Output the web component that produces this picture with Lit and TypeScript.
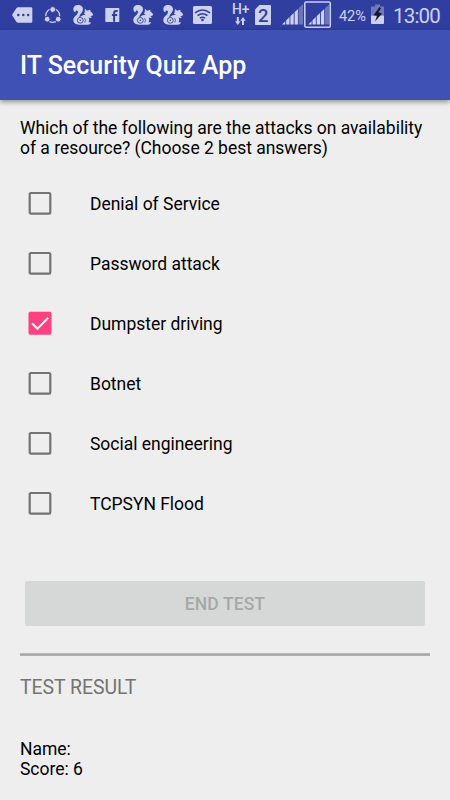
import { LitElement, html, css, svg } from "lit";
import { customElement, property, state } from "lit/decorators.js";

const squirrel = svg`
  <path d="M3.400 9.500C3.100 6.600 5.200 4.800 8.300 4.900c3 .1 4.900 2 4.700 4.700-.2 2.600-2.300 3.900-3.300 6-.4.900-.5 1.600-.3 2.300 1.500-2.300 3.700-3 6.400-3.200l2.200 1.300c1.300 2 1.600 4.400.6 6.200h2.300c-.3 1.800-1.700 2.500-3.500 2.500H9.300c-3.800 0-6-1.800-6-4.600 0-3.700 4-4.600 4.600-7.600.2-1.200-.3-1.900-1.200-1.900-.8 0-1.200.7-1.200 1.700-1.200-.1-2-1.200-2.100-2.800z"/>
  <path d="M14 13.800l.8-2 .1-3 2.200 1.900 3.200-.9.200 1.900c1.300.5 2.300 1.600 2.600 3-.4 1-1.600 1.300-3 1.300l1.800 1.200c-1 1.200-3 1-4.200-.2l-1.700-2.100z"/>
  <circle cx="10.300" cy="20.300" r="2.900" fill="none" stroke="#303f9f" stroke-width=".9"/>
  <circle cx="10.300" cy="20.300" r=".8" fill="#303f9f"/>
  <path d="M14.600 18.100q1.500 2.200.2 4.400" fill="none" stroke="#303f9f" stroke-width=".8"/>`;

const bars = svg`
  <path d="M0 24.500l3.300-3.200v3.200zM4.200 24.500v-4.200l3.300-3.200v7.400zM8.400 24.500v-8.200l3.300-3.200v11.400zM12.600 24.500v-12.300l3.300-3.200v15.500z"/>
  <path d="M16.600 24.500v-16.300l4.400-4.200v20.500z" opacity=".38"/>`;

@customElement("status-bar")
export class StatusBar extends LitElement {
  static styles = css`
    :host {
      display: flex;
      height: 30px;
      background: #303f9f;
      color: #cdd1ec;
      font-family: Roboto, "Liberation Sans", sans-serif;
      line-height: 30px;
      white-space: nowrap;
    }
    svg { display: block; flex: none; height: 30px; fill: #cdd1ec; }
    .h { font: 500 14.5px Roboto, sans-serif; }
    .sim { font: 500 18.5px Roboto, sans-serif; fill: #303f9f; }
    .pct { width: 32px; font-size: 14.600px; letter-spacing: -0.1px; padding-top: 1px; box-sizing: border-box; }
    .time { padding-left: 6px; font-size: 20.5px; letter-spacing: -0.8px; padding-top: 1px; }
  `;

  render() {
    return html`
      <svg width="42" viewBox="0 0 42 30">
        <path d="M12 15l4.500-7q.6-.8 1.600-.8H31q1.300 0 1.300 1.300v13q0 1.300-1.300 1.300H18.100q-1 0-1.600-.8z"/>
        <g fill="#303f9f"><circle cx="18.300" cy="15" r="1.250"/><circle cx="23.300" cy="15" r="1.250"/><circle cx="28.200" cy="15" r="1.250"/></g>
      </svg>
      <svg width="28" viewBox="0 0 28 30">
        <circle cx="10.700" cy="15.500" r="6.900" fill="none" stroke="#cdd1ec" stroke-width="1.300"/>
        <g stroke="#303f9f" stroke-width="1"><circle cx="10.700" cy="9.500" r="2.900"/><circle cx="5.200" cy="19.200" r="2.900"/><circle cx="16.200" cy="19.200" r="2.900"/></g>
      </svg>
      <svg width="30" viewBox="0 0 30 30">${squirrel}</svg>
      <svg width="30" viewBox="0 0 30 30">
        <rect x="5.300" y="8" width="14" height="14" rx=".8"/>
        <path d="M17.700 10.900h-1.700q-1.900 0-1.900 2v8.900M11.900 15.100h5.300" fill="none" stroke="#303f9f" stroke-width="2"/>
      </svg>
      <svg width="30" viewBox="0 0 30 30">${squirrel}</svg>
      <svg width="30" viewBox="0 0 30 30">${squirrel}</svg>
      <svg width="40" viewBox="0 0 40 30">
        <rect x="3" y="6" width="19" height="18" rx="1.500"/>
        <g fill="none" stroke="#303f9f" stroke-width="1.500"><path d="M5 12.800q7.500-5.500 15 0M7.500 15.700q5-3.700 10 0M9.900 18.200q2.600-2 5.200 0"/></g>
        <circle cx="12.500" cy="20" r="1.300" fill="#303f9f"/>
      </svg>
      <svg width="22" viewBox="0 0 22 30">
        <text class="h" x="2" y="14" textLength="17.500" lengthAdjust="spacingAndGlyphs">H+</text>
        <path d="M6.800 17h2v4.300h1.700l-2.700 3.700-2.700-3.700h1.700zM12 25v-4.300h-1.700l2.700-3.700 2.700 3.700h-1.700v4.300z"/>
      </svg>
      <svg width="30" viewBox="0 0 30 30">
        <path d="M7.500 5h10.500q1 0 1 1v18q0 1-1 1h-14q-1 0-1-1V9.500z"/>
        <text class="sim" x="5.900" y="21.700">2</text>
      </svg>
      <svg width="22" viewBox="0 0 22 30">${bars}</svg>
      <svg width="35" viewBox="0 0 35 30">
        <rect x=".8" y="2" width="25.500" height="25.200" rx="1.500" fill="none" stroke="#cdd1ec" stroke-width="1.500"/>
        <g transform="translate(4.300 0)">${bars}</g>
      </svg>
      <span class="pct">42%</span>
      <svg width="16" viewBox="0 0 16 30">
        <path d="M4 4.500h5v2h4v9H0v-9h4z" opacity=".4"/>
        <path d="M0 15.500h13V23q0 1-1 1H1q-1 0-1-1z"/>
        <path d="M8.500 7L2.500 15.200l3.500.6L4 21.500l7-8-3.800-1.200L10 8.500z" fill="#111830"/>
      </svg>
      <span class="time">13:00</span>
    `;
  }
}

@customElement("quiz-option")
export class QuizOption extends LitElement {
  @property() label = "";
  @property({ type: Boolean }) checked = false;

  static styles = css`
    :host { display: flex; align-items: center; height: 60px; padding-left: 8px; }
    svg { display: block; width: 24px; height: 24px; margin-right: 38px; }
    .label { padding-top: 1px; }
  `;

  render() {
    return html`
      <svg viewBox="0 0 24 24">
        ${this.checked
          ? svg`<rect x=".5" y=".800" width="23" height="23" rx="1.800" fill="#ff4081"/>
              <path d="M4 12.200l5.400 5.500L20.300 6.800" fill="none" stroke="#eee" stroke-width="2.200"/>`
          : svg`<rect x="1.700" y="2" width="20.600" height="20.600" rx="1.200" fill="none" stroke="#737373" stroke-width="2.200"/>`}
      </svg>
      <span class="label">${this.label}</span>
    `;
  }
}

@customElement("app-root")
export class AppRoot extends LitElement {
  @state() private options = [
    { label: "Denial of Service", checked: false },
    { label: "Password attack", checked: false },
    { label: "Dumpster driving", checked: true },
    { label: "Botnet", checked: false },
    { label: "Social engineering", checked: false },
    { label: "TCPSYN Flood", checked: false },
  ];

  static styles = css`
    :host {
      display: flex;
      flex-direction: column;
      height: 800px;
      overflow: hidden;
      background: #eee;
      color: #000;
      font: 17.5px/20px Roboto, "Liberation Sans", sans-serif;
      letter-spacing: -0.02px;
    }
    .toolbar {
      display: flex;
      align-items: center;
      height: 70px;
      padding: 2px 20px 0;
      box-sizing: border-box;
      background: #3f51b5;
      color: #fff;
      font-size: 25px;
      font-weight: 500;
      letter-spacing: 0.03px;
      box-shadow: 0 2px 5px rgba(0, 0, 0, 0.4);
    }
    main { display: flex; flex-direction: column; padding: 18px 20px 0; }
    .question { margin-bottom: 15px; white-space: nowrap; }
    .end {
      height: 45px;
      margin: 48px 5px 27px;
      border: 0;
      border-radius: 2.5px;
      background: #d6d8d7;
      color: #a6a8a7;
      font: 500 17.5px Roboto, sans-serif;
      letter-spacing: 0.1px;
    }
    .rule { height: 3px; background: linear-gradient(#bbb 1px, #a6a6a6 1px, #a6a6a6 2px, #b0b0b0 2px); margin-bottom: 22px; }
    .heading { color: #737373; font-size: 19.4px; margin-bottom: 41px; }
  `;

  render() {
    return html`
      <status-bar></status-bar>
      <div class="toolbar">IT Security Quiz App</div>
      <main>
        <div class="question">
          Which of the following are the attacks on availability<br />of a resource? (Choose 2 best answers)
        </div>
        ${this.options.map((o) => html`<quiz-option .label=${o.label} .checked=${o.checked}></quiz-option>`)}
        <button class="end" disabled>END TEST</button>
        <div class="rule"></div>
        <div class="heading">TEST RESULT</div>
        <div>Name:</div>
        <div>Score: 6</div>
      </main>
    `;
  }
}
